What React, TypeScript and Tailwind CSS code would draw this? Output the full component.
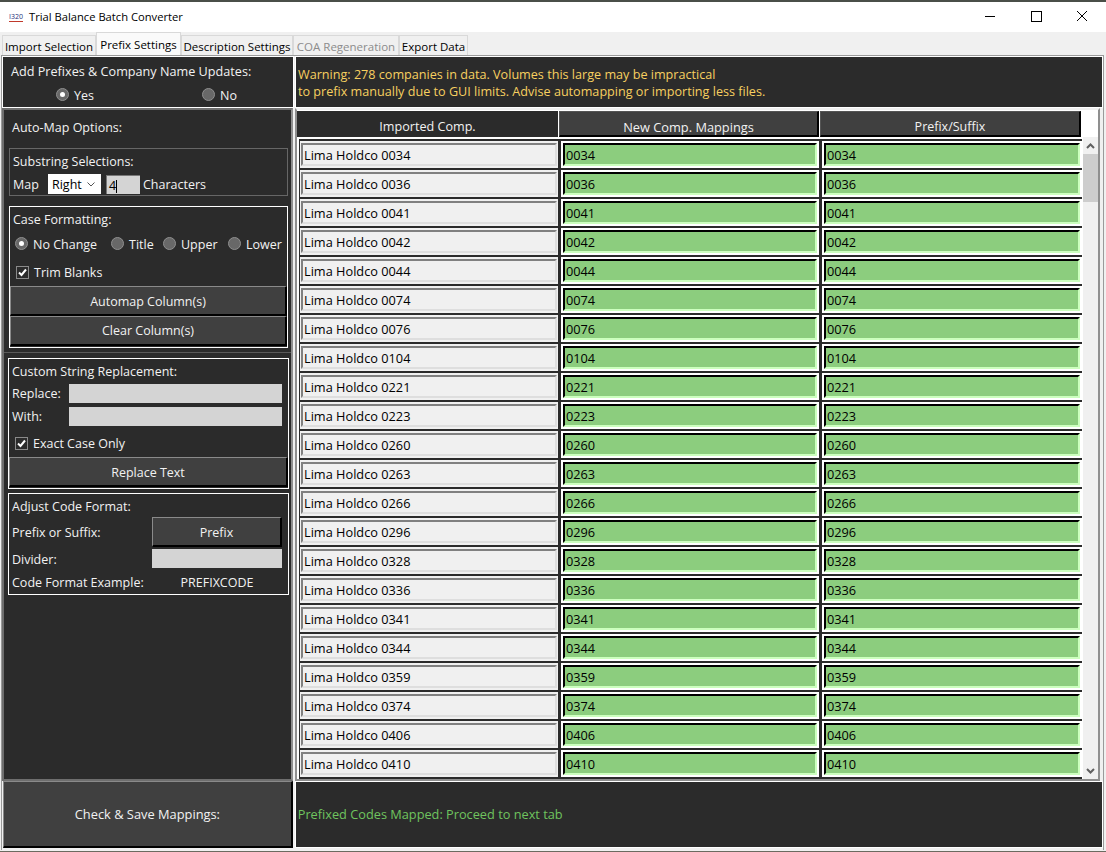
import React from "react";

const codes = ["0034","0036","0041","0042","0044","0074","0076","0104","0221","0223","0260","0263","0266","0296","0328","0336","0341","0344","0359","0374","0406","0410"];

function Radio({ on, label, className = "" }: { on?: boolean; label: string; className?: string }) {
  return (
    <div className={`flex items-center gap-[5px] ${className}`}>
      <span className="w-[13px] h-[13px] rounded-full border border-[#8f8f8f] bg-[#686868] flex items-center justify-center shrink-0">
        {on && <span className="w-[5px] h-[5px] rounded-full bg-white" />}
      </span>
      <span className="pt-[4px]">{label}</span>
    </div>
  );
}

function Check({ label, className = "" }: { label: string; className?: string }) {
  return (
    <div className={`flex items-center gap-[5px] ${className}`}>
      <span className="w-[13px] h-[13px] border border-[#8a8a8a] bg-[#2b2b2b] flex items-center justify-center shrink-0">
        <svg width="9" height="9" viewBox="0 0 9 9"><path d="M1 4.5 L3.5 7 L8 1.5" fill="none" stroke="#fff" strokeWidth="2" /></svg>
      </span>
      <span className="pt-[2px]">{label}</span>
    </div>
  );
}

function Btn({ children, className = "" }: { children: React.ReactNode; className?: string }) {
  return (
    <div className={`bg-[#404040] border-t border-l border-t-[#8a8a8a] border-l-[#8a8a8a] border-b-2 border-r-2 border-b-black border-r-black flex items-center justify-center ${className}`}>
      {children}
    </div>
  );
}

function Tab({ children, active, muted, className = "" }: { children: React.ReactNode; active?: boolean; muted?: boolean; className?: string }) {
  return (
    <div className={`flex items-center justify-center whitespace-nowrap text-[11.5px] border border-b-0 border-[#d9d9d9] ${active ? "h-[23px] bg-[#fafafa] pt-[2px]" : "h-[20px] bg-[#f0f0f0] pt-[3px]"} ${muted ? "text-[#8c8c8c]" : "text-black"} ${className}`}>
      {children}
    </div>
  );
}

function Row({ code }: { code: string }) {
  return (
    <div className="flex h-[27px] mb-[2px] text-black text-[12.75px]">
      <div className="w-[258px] ml-[1px] bg-[#f0f0f0] py-[2px] px-[1px] shrink-0">
        <div className="h-full border-2 border-t-[#808080] border-l-[#808080] border-b-[#dedede] border-r-[#dedede] flex items-center pl-[1px] pt-[2px]">Lima Holdco {code}</div>
      </div>
      <div className="w-[258px] ml-[3px] bg-white py-[2px] px-[2px] shrink-0">
        <div className="h-full bg-[#8ccd7e] border-2 border-t-black border-l-black border-b-[#ccffbe] border-r-[#ccffbe] flex items-center pl-[1px] pt-[2px]">{code}</div>
      </div>
      <div className="w-[260px] ml-[3px] bg-white py-[2px] px-[2px] shrink-0">
        <div className="h-full bg-[#8ccd7e] border-2 border-t-black border-l-black border-b-[#ccffbe] border-r-[#ccffbe] flex items-center pl-[1px] pt-[2px]">{code}</div>
      </div>
    </div>
  );
}

export default function App() {
  return (
    <div className="w-[1106px] h-[852px] bg-[#f0f0f0] flex flex-col overflow-hidden font-['Open_Sans',sans-serif] text-[12.5px] text-[#f2f2f2]">
      <div className="h-[2px] bg-[#4a4f48] shrink-0" />
      <div className="h-[30px] bg-white flex items-center text-black shrink-0">
        <span className="ml-[9px] w-[14px] text-[7px] leading-[8px] text-[#1f2f7a] border-b border-[#c0392b]">I320</span>
        <span className="ml-[6px] text-[11.2px]">Trial Balance Batch Converter</span>
        <div className="ml-auto flex items-center">
          <svg width="46" height="30" viewBox="0 0 46 30"><path d="M18 14.5 H28" stroke="#000" /></svg>
          <svg width="46" height="30" viewBox="0 0 46 30"><rect x="18.5" y="9.5" width="10" height="10" fill="none" stroke="#000" /></svg>
          <svg width="46" height="30" viewBox="0 0 46 30" className="mr-[1px]"><path d="M18 9 L28 19 M28 9 L18 19" stroke="#000" /></svg>
        </div>
      </div>
      <div className="h-[23px] flex items-end pl-[2px] shrink-0">
        <Tab className="w-[94px]">Import Selection</Tab>
        <Tab active className="w-[85px]">Prefix Settings</Tab>
        <Tab className="w-[112px]">Description Settings</Tab>
        <Tab muted className="w-[106px]">COA Regeneration</Tab>
        <Tab className="w-[69px]">Export Data</Tab>
      </div>
      <div className="mx-[1px] w-[1103px] h-[795px] border-t border-x border-[#9a9a9a] flex flex-col shrink-0">
        <div className="flex h-[52px] shrink-0 gap-[1px] bg-[#f0f0f0]">
          <div className="w-[292px] border border-white bg-[#2b2b2b] flex flex-col pl-[8px]">
            <div className="mt-[5px] leading-[18px] text-[12.65px]">Add Prefixes &amp; Company Name Updates:</div>
            <div className="flex mt-[5px] pl-[45px] h-[18px]">
              <Radio on label="Yes" className="w-[146px]" />
              <Radio label="No" />
            </div>
          </div>
          <div className="flex-1 border border-white bg-[#2b2b2b] text-[#f7d060] pl-[2px] pt-[9px] text-[12.62px] leading-[17px]">
            <div>Warning: 278 companies in data. Volumes this large may be impractical</div>
            <div>to prefix manually due to GUI limits. Advise automapping or importing less files.</div>
          </div>
        </div>
        <div className="flex h-[673px] shrink-0 gap-[1px]">
          <div className="w-[291px] bg-[#2b2b2b] border-2 border-[#6e6e6e] border-r-[#8f8f8f] flex flex-col shrink-0">
            <div className="pl-[8px] mt-[9px] leading-[18px]">Auto-Map Options:</div>
            <div className="ml-[5px] w-[279px] h-[48px] mt-[11px] border border-[#666666] px-[3px] shrink-0">
              <div className="mt-[4px] leading-[18px]">Substring Selections:</div>
              <div className="flex items-center mt-[3px] h-[20px]">
                <span className="w-[35px] pt-[2px]">Map</span>
                <div className="w-[53px] h-[20px] bg-white text-black flex items-center pl-[4px] justify-between pr-[6px]">
                  <span className="pt-[2px]">Right</span>
                  <svg width="8" height="5" viewBox="0 0 8 5"><path d="M0.5 0.5 L4 4 L7.5 0.5" fill="none" stroke="#555" /></svg>
                </div>
                <div className="ml-[5px] w-[34px] h-[19px] bg-[#d4d4d4] text-black pl-[2px] leading-[20px] border-l border-t border-[#777777]">4<span className="inline-block w-[1px] h-[13px] bg-black align-middle" /></div>
                <span className="ml-[3px] pt-[2px]">Characters</span>
              </div>
            </div>
            <div className="ml-[5px] w-[279px] h-[142px] mt-[10px] border border-white flex flex-col shrink-0">
              <div className="ml-[3px] mt-[4px] leading-[18px]">Case Formatting:</div>
              <div className="flex items-center mt-[5px] ml-[5px] h-[18px]">
                <Radio on label="No Change" className="w-[96px]" />
                <Radio label="Title" className="w-[52px]" />
                <Radio label="Upper" className="w-[65px]" />
                <Radio label="Lower" />
              </div>
              <Check label="Trim Blanks" className="ml-[6px] mt-[11px] h-[18px]" />
              <Btn className="h-[30px] mt-[5px] pt-[4px]">Automap Column(s)</Btn>
              <Btn className="h-[30px] pt-[2px]">Clear Column(s)</Btn>
            </div>
            <div className="h-[1px] bg-[#5a5a5a] mt-[4px] shrink-0" />
            <div className="ml-[4px] w-[281px] h-[131px] mt-[5px] border border-white flex flex-col shrink-0">
              <div className="ml-[3px] mt-[4px] leading-[18px]">Custom String Replacement:</div>
              <div className="flex items-center mt-[3px] h-[19px]">
                <span className="ml-[3px] w-[57px] pt-[2px]">Replace:</span>
                <div className="w-[213px] h-[19px] bg-[#d4d4d4]" />
              </div>
              <div className="flex items-center mt-[4px] h-[19px]">
                <span className="ml-[3px] w-[57px] pt-[2px]">With:</span>
                <div className="w-[213px] h-[19px] bg-[#d4d4d4]" />
              </div>
              <Check label="Exact Case Only" className="ml-[6px] mt-[8px] h-[18px]" />
              <Btn className="h-[30px] mt-[5px] pt-[4px]">Replace Text</Btn>
            </div>
            <div className="ml-[4px] w-[281px] h-[102px] mt-[4px] border border-white flex flex-col shrink-0">
              <div className="ml-[3px] mt-[4px] leading-[18px]">Adjust Code Format:</div>
              <div className="flex items-center mt-[1px] h-[30px]">
                <span className="ml-[3px] w-[140px] pt-[2px]">Prefix or Suffix:</span>
                <Btn className="w-[130px] h-[30px] pt-[4px]">Prefix</Btn>
              </div>
              <div className="flex items-center mt-[2px] h-[19px]">
                <span className="ml-[3px] w-[140px] pt-[4px]">Divider:</span>
                <div className="w-[130px] h-[19px] bg-[#d4d4d4]" />
              </div>
              <div className="flex items-center mt-[5px] h-[18px]">
                <span className="ml-[3px] w-[140px] pt-[2px]">Code Format Example:</span>
                <span className="w-[130px] text-center pt-[2px]">PREFIXCODE</span>
              </div>
            </div>
          </div>
          <div className="w-[805px] border-2 border-[#8f8f8f] border-t-[#f0f0f0] bg-white flex flex-col shrink-0 ml-[1px]">
            <div className="flex h-[26px] mt-[1px] bg-white shrink-0">
              <div className="w-[261px] bg-[#2b2b2b] flex items-end justify-center pb-[1px] leading-[18px] text-[12.6px]">Imported Comp.</div>
              <div className="w-[1px] bg-white" />
              <Btn className="w-[260px] border-t-[#555555] border-l-[#555555] text-[12.8px] pt-[8px]">New Comp. Mappings</Btn>
              <div className="w-[1px] bg-white" />
              <Btn className="w-[261px] border-t-[#555555] border-l-[#555555] pt-[8px]">Prefix/Suffix</Btn>
            </div>
            <div className="flex flex-1 min-h-0">
              <div className="ml-[2px] w-[783px] mt-[2px] pt-[2px] bg-[#2b2b2b] shrink-0 h-[640px] overflow-hidden">
                {codes.map((c) => <Row key={c} code={c} />)}
              </div>
              <div className="w-[15px] ml-[1px] bg-[#f0f0f0] flex flex-col items-center shrink-0">
                <svg width="9" height="6" viewBox="0 0 9 6" className="mt-[6px]"><path d="M1 5 L4.5 1.5 L8 5" fill="none" stroke="#606060" strokeWidth="2" /></svg>
                <div className="w-[15px] h-[48px] bg-[#cdcdcd] mt-[5px]" />
                <svg width="9" height="6" viewBox="0 0 9 6" className="mt-auto mb-[5px]"><path d="M1 1 L4.5 4.5 L8 1" fill="none" stroke="#606060" strokeWidth="2" /></svg>
              </div>
            </div>
          </div>
        </div>
        <div className="flex h-[67px] shrink-0 gap-[1px]">
          <Btn className="w-[290px] ml-[1px] text-[12.85px] pt-[2px]">Check &amp; Save Mappings:</Btn>
          <div className="w-[809px] ml-[1px] border border-white bg-[#2b2b2b] flex items-center pl-[2px] text-[12.75px] text-[#6fc45f]">Prefixed Codes Mapped: Proceed to next tab</div>
        </div>
      </div>
      <div className="h-[1px] mt-auto bg-[#6b6b60] shrink-0" />
    </div>
  );
}
